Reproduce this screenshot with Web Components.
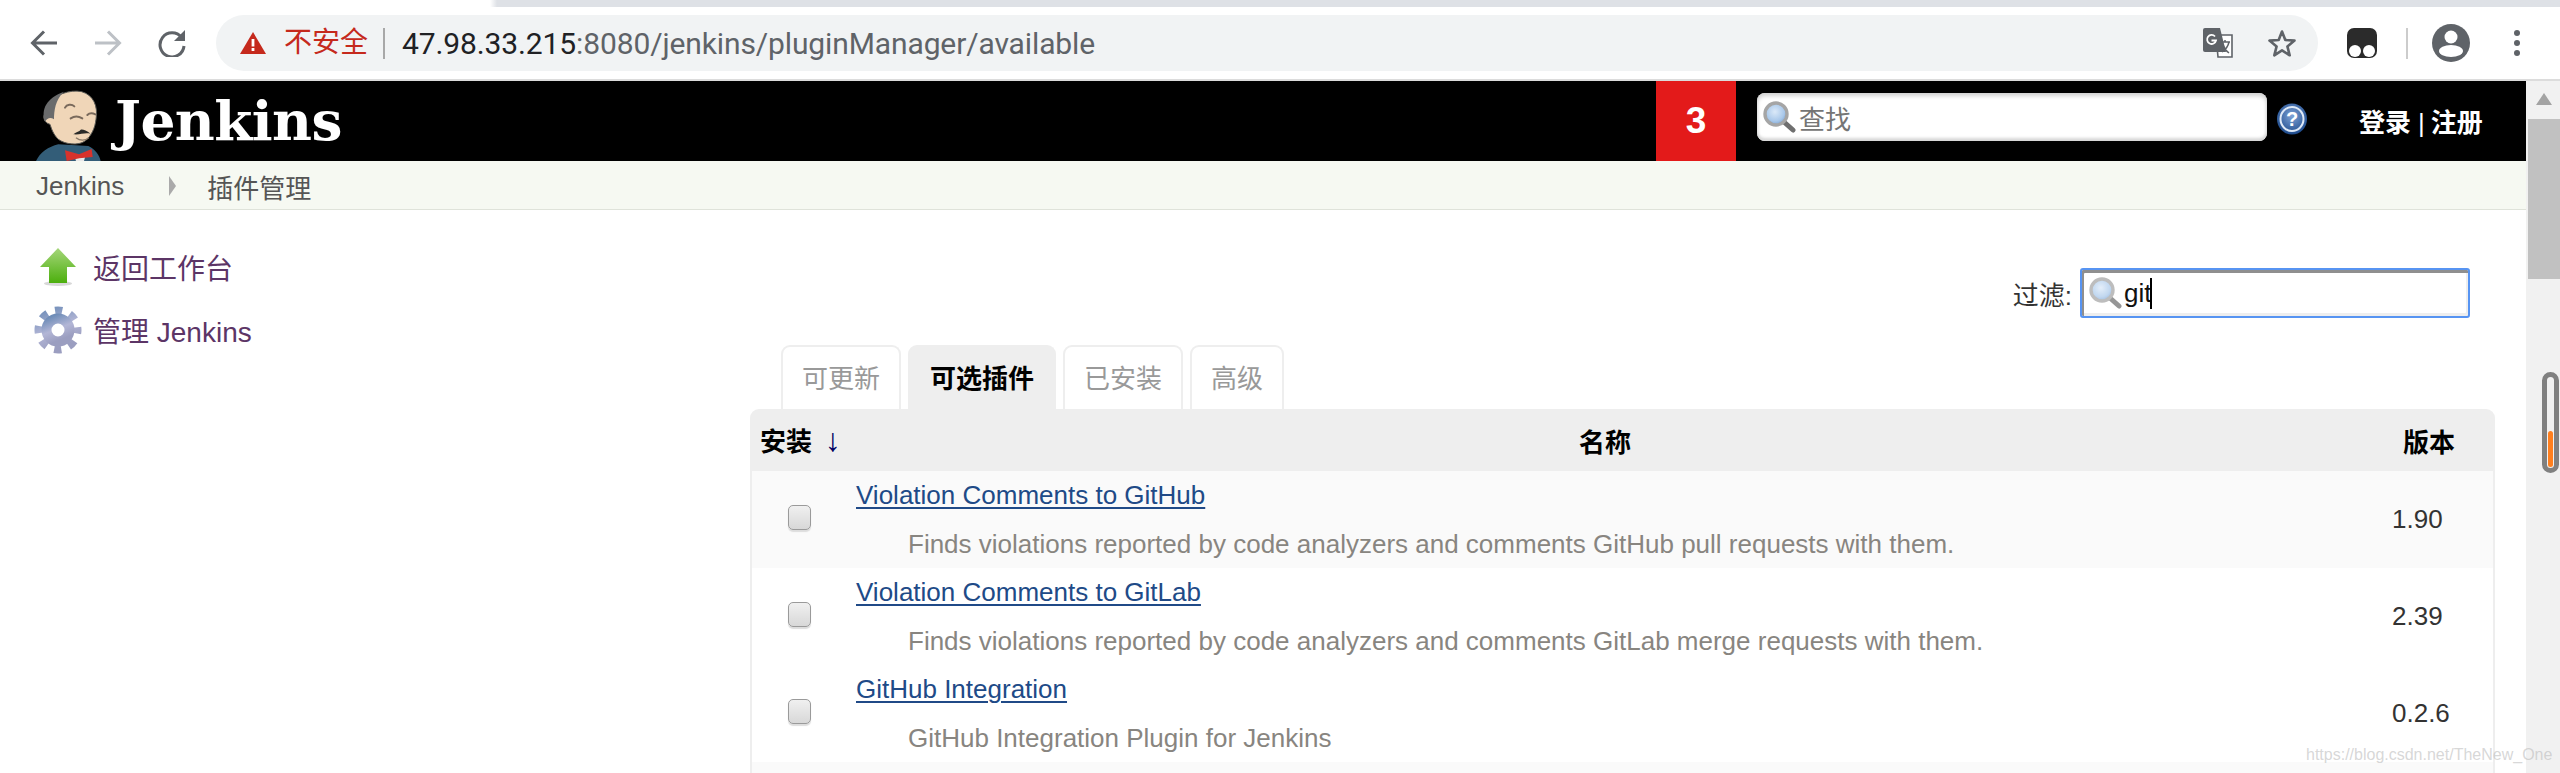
<!DOCTYPE html>
<html><head><meta charset="utf-8">
<style>
html,body{margin:0;height:773px;overflow:hidden;background:#fff;font-family:"Liberation Sans","Noto Sans CJK SC",sans-serif}
body{display:flex;flex-direction:column}
.stage{display:flex;flex:1;min-height:0;position:relative;overflow:hidden}
.page{flex:1;min-width:0;display:flex;flex-direction:column}
.work{display:flex;flex:1;min-height:0;overflow:hidden}
</style></head><body>
<browser-bar></browser-bar>
<div class="stage">
  <div class="page">
    <jenkins-header></jenkins-header>
    <jenkins-crumbs></jenkins-crumbs>
    <div class="work">
      <side-panel>
        <side-task icon="up">返回工作台</side-task>
        <side-task icon="gear">管理 Jenkins</side-task>
      </side-panel>
      <plugin-main>
        <plugin-row name="Violation Comments to GitHub" desc="Finds violations reported by code analyzers and comments GitHub pull requests with them." version="1.90" shade></plugin-row>
        <plugin-row name="Violation Comments to GitLab" desc="Finds violations reported by code analyzers and comments GitLab merge requests with them." version="2.39"></plugin-row>
        <plugin-row name="GitHub Integration" desc="GitHub Integration Plugin for Jenkins" version="0.2.6"></plugin-row>
        <plugin-row shade></plugin-row>
      </plugin-main>
    </div>
  </div>
  <page-scrollbar></page-scrollbar>
  <water-mark>https://blog.csdn.net/TheNew_One</water-mark>
</div>
<script>
const CJK='"Liberation Sans","Noto Sans CJK SC",sans-serif';
const lens=(id,op=1)=>`<svg width="34" height="34" viewBox="0 0 34 34" style="opacity:${op};flex:none"><defs><radialGradient id="${id}" cx=".45" cy=".4" r=".6"><stop offset="0" stop-color="#dbe9f8"/><stop offset=".7" stop-color="#a9c8ea"/><stop offset="1" stop-color="#7fa6d4"/></radialGradient></defs><line x1="22" y1="22" x2="31" y2="30" stroke="#6f6f6f" stroke-width="5" stroke-linecap="round"/><circle cx="14" cy="14" r="11" fill="url(#${id})" stroke="#a5a5a5" stroke-width="3.4"/></svg>`;
function def(name,html,init){
  customElements.define(name,class extends HTMLElement{
    constructor(){super();this.attachShadow({mode:'open'}).innerHTML=typeof html==='function'?html(this):html;}
    connectedCallback(){if(init)init(this)}
  });
}
def('browser-bar',`<style>
:host{display:block;height:81px;flex:none;background:#fff;position:relative;box-sizing:border-box;border-bottom:2px solid #dcdcdc}
.strip{height:7px;background:linear-gradient(90deg,#fff 0 490px,#dee1e6 497px)}
.row{display:flex;align-items:center;height:56px;margin-top:8px}
.nav{width:64px;display:flex;justify-content:center;flex:none}
.lead{width:20px;flex:none}
.omni{flex:none;width:2102px;height:56px;margin-left:12px;box-sizing:border-box;border-radius:28px;background:#f1f3f4;display:flex;align-items:center;padding-left:24px;font:28px ${CJK}}
.warn{color:#c5291c;margin-left:18px;line-height:56px}
.sep{width:2px;height:31px;background:#a8a8a8;margin:0 17px 0 15px;flex:none}
.url{color:#5f6368;font-family:Roboto,${CJK};font-size:30px;letter-spacing:-.12px;white-space:nowrap}
.url b{font-weight:400;color:#202124}
.sp{flex:1}
.i{display:flex;flex:none}
.vs{width:2px;height:31px;background:#ccc;flex:none}
</style>
<div class="strip"></div>
<div class="row">
<div class="lead" style="width:12px"></div>
<div class="nav"><svg width="28" height="28" viewBox="0 0 28 28" fill="none" stroke="#5f6368" stroke-width="3"><path d="M27 14H3M14 2.500 2.500 14 14 25.500"/></svg></div>
<div class="nav"><svg width="28" height="28" viewBox="0 0 28 28" fill="none" stroke="#bdc1c6" stroke-width="3"><path d="M1 14h24M14 2.500 25.500 14 14 25.500"/></svg></div>
<div class="nav"><svg width="28" height="28" viewBox="0 0 28 28"><path d="M23.600 8.600A12 12 0 1 0 26 17" fill="none" stroke="#5f6368" stroke-width="3"/><path d="M27 1v11H16z" fill="#5f6368"/></svg></div>
<div class="omni">
<svg class="i" width="26" height="22" viewBox="0 0 26 22"><path d="M13 0 26 22H0z" fill="#c5291c"/><path d="M11.600 7h2.800v7.500h-2.800zM11.600 16h2.800v3h-2.800z" fill="#fff"/></svg>
<span class="warn">不安全</span><span class="sep"></span>
<span class="url"><b>47.98.33.215</b>:8080/jenkins/pluginManager/available</span>
<span class="sp"></span>
<svg class="i" width="30" height="30" viewBox="0 0 30 30" style="margin-right:34px"><path d="M13 7h16v22H15z" fill="#fff" stroke="#5f6368" stroke-width="1.600"/><path d="M2 0h15l6 24H2a2 2 0 0 1-2-2V2a2 2 0 0 1 2-2z" fill="#5f6368"/><path d="M12 8.500a4.500 4.500 0 1 0 1 4H8.500" fill="none" stroke="#fff" stroke-width="1.800"/><path d="M18 14h9M22 12v2M26 14c-1 5-4 8-7 10M20 17c1 3 3 6 6 8" fill="none" stroke="#5f6368" stroke-width="1.500"/></svg>
<svg class="i" width="30" height="30" viewBox="0 0 30 30" style="margin-right:21px"><path d="M15 3.500 18.300 12l9.200.6-7.100 5.800 2.300 8.900L15 22.400l-7.700 4.900 2.300-8.900-7.100-5.800 9.200-.6z" fill="none" stroke="#5f6368" stroke-width="2.600" stroke-linejoin="round"/></svg>
</div>
<svg class="i" width="30" height="30" viewBox="0 0 30 30" style="margin-left:29px"><rect width="30" height="30" rx="7" fill="#2b2b2b"/><circle cx="8" cy="23" r="6" fill="#fff"/><circle cx="22" cy="23" r="6" fill="#fff"/></svg>
<span class="vs" style="margin-left:29px"></span>
<svg class="i" width="38" height="38" viewBox="0 0 38 38" style="margin-left:24px"><circle cx="19" cy="19" r="19" fill="#5f6368"/><circle cx="19" cy="13" r="6.500" fill="#fff"/><ellipse cx="19" cy="27" rx="12" ry="6" fill="#fff"/></svg>
<svg class="i" width="8" height="28" viewBox="0 0 8 28" style="margin-left:43px"><circle cx="4" cy="4" r="3" fill="#5f6368"/><circle cx="4" cy="14" r="3" fill="#5f6368"/><circle cx="4" cy="24" r="3" fill="#5f6368"/></svg>
</div>`);
def('jenkins-header',`<style>
:host{display:flex;align-items:stretch;height:80px;flex:none;background:#000;color:#fff}
.logo{display:block;flex:none;margin-left:30px}
.title{font:700 55px/80px "DejaVu Serif",serif;margin-left:-8px;letter-spacing:-.6px;width:1544px;padding-left:0;box-sizing:border-box;flex:none;white-space:nowrap;text-indent:3px}
.bell{width:80px;flex:none;background:#e31a1a;font:700 37px/80px "Liberation Sans",sans-serif;text-align:center}
.sbox{flex:none;align-self:flex-start;margin:12px 0 0 21px;width:510px;height:48px;box-sizing:border-box;border-radius:8px;background:#fff;box-shadow:inset 0 3px 4px #cfcfcf,inset 0 -3px 3px #d8d8d8;display:flex;align-items:center;padding-left:5px;font:26px ${CJK};color:#757575}
.sbox span{margin-left:3px}
.help{flex:none;align-self:flex-start;margin:22px 0 0 9px}
.auth{flex:none;margin-left:51px;font:700 26px/84px ${CJK};white-space:nowrap}
.auth i{font-style:normal;font-weight:400;font-size:26px;margin:0 6px 0 7px}
</style>
<svg class="logo" width="90" height="80" viewBox="0 0 270 240">
<path d="M18 240C30 215 55 197 85 190l90 5c20 10 32 25 37 45z" fill="#335d78"/>
<path d="M55 75C70 40 120 25 155 32c35 10 50 43 43 83-3 25-13 50-33 65-20 15-60 10-80-5-15-15-20-30-25-45-20-5-25-30-10-35z" fill="#f0d6b8" stroke="#5a5a55" stroke-width="3"/>
<path d="M45 122C32 85 50 50 102 32 76 55 72 90 72 115c-10-7-20-5-27 7z" fill="#6a6b6c"/>
<path d="M105 80c5-10 20-12 28-4M122 112c12-8 25-6 35 0M172 102c6-6 16-6 24-2" fill="none" stroke="#7a6a5c" stroke-width="6" stroke-linecap="round"/>
<path d="M130 160c10-8 18-8 22-14 6-2 16 2 30 12-20-4-30 4-52 2z" fill="#2a2a28"/>
<path d="M138 170c12 10 28 10 38 0" fill="none" stroke="#8a7a68" stroke-width="4"/>
<path d="M134 226h32l-4 14h-24z" fill="#e9e9e9"/>
<path d="M105 208l42 12 38-16 3 24-40 4-38 8z" fill="#d8322c"/>
</svg>
<span class="title">Jenkins</span>
<div class="bell">3</div>
<div class="sbox">${lens('lh')}<span>查找</span></div>
<svg class="help" width="32" height="32" viewBox="0 0 32 32"><defs><radialGradient id="hg" cx=".5" cy=".4" r=".6"><stop offset="0" stop-color="#7fa3d6"/><stop offset="1" stop-color="#1d4a8c"/></radialGradient></defs><ellipse cx="16" cy="16" rx="15" ry="15.500" fill="url(#hg)"/><ellipse cx="16" cy="16" rx="11.500" ry="12" fill="none" stroke="#dfe9f6" stroke-width="2"/><text x="16" y="23" font-family="Liberation Sans" font-weight="700" font-size="20" fill="#fff" text-anchor="middle">?</text></svg>
<div class="auth">登录<i>|</i>注册</div>`);
def('jenkins-crumbs',`<style>
:host{display:flex;align-items:center;height:46px;flex:none;background:#f6f9f2;border-bottom:1px solid #dfe3da;color:#555;font:26px ${CJK};padding:2px 0 0 36px}
.t{width:0;height:0;border:10px solid transparent;border-left:7px solid #aaa;border-right:0;margin:0 31px 0 45px}
</style><span>Jenkins</span><span class="t"></span><span>插件管理</span>`);
def('side-panel',`<style>:host{display:flex;flex-direction:column;gap:15px;width:750px;flex:none;box-sizing:border-box;padding:33px 0 0 23px}</style><slot></slot>`);
def('side-task',(el)=>`<style>
:host{display:flex;align-items:center;height:48px;font:28px ${CJK};color:#5c3566}
.ic{width:70px;flex:none;display:flex;justify-content:center}
</style><span class="ic">${el.getAttribute('icon')==='up'?
`<svg width="40" height="40" viewBox="0 0 40 40"><defs><linearGradient id="ag" x1="0" y1="0" x2="0" y2="1"><stop offset="0" stop-color="#a5d67a"/><stop offset="1" stop-color="#4caf0d"/></linearGradient></defs><ellipse cx="20" cy="36.500" rx="14" ry="2.500" fill="#d8d8d8"/><path d="M20 1 38 20H29V36H11V20H2z" fill="url(#ag)"/></svg>`:
`<svg width="48" height="48" viewBox="0 0 48 48"><defs><linearGradient id="gg" x1="0" y1="0" x2=".4" y2="1"><stop offset="0" stop-color="#6f8db8"/><stop offset=".55" stop-color="#b3b6d6"/><stop offset="1" stop-color="#9b9ec0"/></linearGradient></defs><circle cx="24" cy="24" r="19.500" fill="none" stroke="url(#gg)" stroke-width="8" stroke-dasharray="7.300 8.014" stroke-dashoffset="3.600"/><circle cx="24" cy="24" r="11.500" fill="none" stroke="url(#gg)" stroke-width="10"/></svg>`}</span><slot></slot>`);
def('plugin-main',`<style>
:host{display:block;flex:1;min-width:0;padding-right:31px;font:26px ${CJK}}
.filter{display:flex;justify-content:flex-end;align-items:center;height:50px;margin:58px 25px 27px 0;font-size:26px;color:#333}
.fbox{width:390px;height:50px;box-sizing:border-box;margin-left:8px;border:2px solid #5794f2;border-radius:3px;box-shadow:inset 2px 3px 0 #8f8f8f,inset -2px -3px 0 #eee;display:flex;align-items:center;padding-left:6px;color:#111;font-size:26px}
.caret{width:2px;height:31px;background:#000;margin-left:-1px}
.tabs{display:flex;gap:7px;padding-left:31px;height:64px;color:#999}
.tab{box-sizing:border-box;border:2px solid #eee;border-bottom:0;border-radius:9px 9px 0 0;padding:0 19px;line-height:64px;white-space:nowrap}
.on{background:#eee;color:#000;font-weight:700;padding:0 20px}
.head{display:grid;grid-template-columns:1fr 103px;height:62px;background:#eee;border-radius:9px 9px 0 0;align-items:center;color:#000;font-weight:700;position:relative}
.first{position:absolute;left:10px;top:0;line-height:62px;white-space:nowrap}
.first i{font-style:normal;font-weight:400;font-size:32px;margin-left:13px;color:#000060}
.mid{text-align:center;padding-left:68px}
.last{text-align:right;padding-right:40px}
.body{border:solid #eee;border-width:0 2px}
</style>
<div class="filter"><span>过滤:</span><div class="fbox">${lens('lf',.72)}<span style="margin-left:2px">git</span><span class="caret"></span></div></div>
<div class="tabs"><span class="tab">可更新</span><span class="tab on">可选插件</span><span class="tab">已安装</span><span class="tab">高级</span></div>
<div class="head"><span class="first">安装<i>↓</i></span><span class="mid">名称</span><span class="last">版本</span></div>
<div class="body"><slot></slot></div>`);
def('plugin-row',(el)=>{
 const n=el.getAttribute('name');
 return `<style>
:host{display:grid;grid-template-columns:104px 1fr 101px;height:97px;box-sizing:border-box;align-items:center;font:26px ${CJK}}
:host([shade]){background:#fafafa}
.cb{width:23px;height:25px;box-sizing:border-box;margin-left:36px;margin-top:-4px;border:1.500px solid #9a9a9a;border-radius:5px;background:linear-gradient(#f0f0f0,#d8d8d8);box-shadow:0 2px 1px #ddd}
.info{align-self:start;padding-top:8px}
a{display:block;width:max-content;color:#204a87;line-height:33px;text-decoration:underline;text-decoration-thickness:2px;text-underline-offset:3px}
.d{padding:16px 0 0 52px;line-height:33px;color:#888580;white-space:nowrap}
.v{color:#333}
</style>${n?`<span class="cb"></span><div class="info"><a>${n}</a><div class="d">${el.getAttribute('desc')}</div></div><span class="v">${el.getAttribute('version')}</span>`:''}`;
});
def('page-scrollbar',`<style>
:host{display:block;width:34px;flex:none;background:#f1f1f1;position:relative}
.a{width:0;height:0;margin:12px auto 0;border:8px solid transparent;border-bottom:12px solid #a3a3a3;border-top:0;position:relative;left:1px}
.thumb{margin:14px 0 0 2px;height:160px;background:#c1c1c1}
.mark{position:absolute;right:1px;top:291px;width:17px;height:101px;box-sizing:border-box;border:5px solid #808080;border-radius:9px}
.or{position:absolute;left:1px;bottom:1px;width:5px;height:36px;background:#ff7f1e;border-radius:3px}
</style><div class="a"></div><div class="thumb"></div><div class="mark"><div class="or"></div></div>`);
def('water-mark',`<style>:host{position:absolute;left:2306px;top:662px;font:16px/24px "Liberation Sans",sans-serif;color:rgba(190,190,190,.62);white-space:nowrap}</style><slot></slot>`);
</script>
</body></html>
